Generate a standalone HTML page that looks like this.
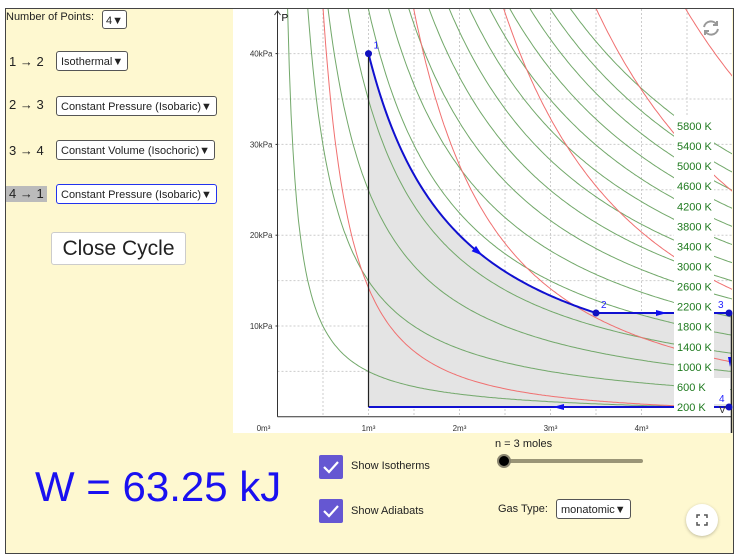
<!DOCTYPE html>
<html><head><meta charset="utf-8"><style>
body{margin:0;width:737px;height:556px;background:#fff;font-family:"Liberation Sans",sans-serif;position:relative;overflow:hidden}
#app{position:absolute;left:5px;top:8px;width:727px;height:544px;border:1px solid #444;background:#fef8d0}
.a{position:absolute;font-size:13px;color:#222}
.dd{position:absolute;height:20px;border:1px solid #555;border-radius:3px;background:#fff;font-size:11px;line-height:20px;padding:0 4px;box-sizing:border-box;color:#222;white-space:nowrap}
.cb{position:absolute;width:24px;height:24px;background:#6557d2;border-radius:2px}
.cb svg{position:absolute;left:3px;top:4px}
</style></head><body>
<div id="app"></div>
<div class="a" style="left:6px;top:11px;font-size:11px">Number of Points:</div>
<div class="dd" style="left:102px;top:10px;height:19px;padding:0 3px">4▼</div>
<div class="a" style="left:9px;top:54px">1 → 2</div>
<div class="dd" style="left:56px;top:51px">Isothermal▼</div>
<div class="a" style="left:9px;top:97px">2 → 3</div>
<div class="dd" style="left:56px;top:96px">Constant Pressure (Isobaric)▼</div>
<div class="a" style="left:9px;top:143px">3 → 4</div>
<div class="dd" style="left:56px;top:140px">Constant Volume (Isochoric)▼</div>
<div class="a" style="left:6px;top:186px;background:#bbb;padding:0 3px;height:16px;line-height:16px">4 → 1</div>
<div class="dd" style="left:56px;top:184px;border-color:#2233ee">Constant Pressure (Isobaric)▼</div>
<div style="position:absolute;left:51px;top:232px;width:133px;height:31px;border:1px solid #ccc;border-radius:3px;background:#fff;font-size:21px;line-height:31px;text-align:center;color:#222">Close Cycle</div>
<div style="position:absolute;left:35px;top:463px;font-size:42px;color:#1a10f0;line-height:48px">W = 63.25 kJ</div>
<div class="cb" style="left:319px;top:455px"><svg width="18" height="16"><path d="M2 8 L7 13 L16 3" stroke="#fff" stroke-width="2.2" fill="none"/></svg></div>
<div class="a" style="left:351px;top:460px;font-size:11px">Show Isotherms</div>
<div class="cb" style="left:319px;top:499px"><svg width="18" height="16"><path d="M2 8 L7 13 L16 3" stroke="#fff" stroke-width="2.2" fill="none"/></svg></div>
<div class="a" style="left:351px;top:505px;font-size:11px">Show Adiabats</div>
<div class="a" style="left:495px;top:438px;font-size:11px">n = 3 moles</div>
<div style="position:absolute;left:503px;top:459px;width:140px;height:4px;border-radius:2px;background:#9a9577"></div>
<div style="position:absolute;left:497px;top:454px;width:10px;height:10px;border-radius:50%;background:#000;border:2px solid #8a8570"></div>
<div class="a" style="left:498px;top:503px;font-size:11px">Gas Type:</div>
<div class="dd" style="left:556px;top:499px;width:75px">monatomic▼</div>
<div style="position:absolute;left:686px;top:504px;width:32px;height:32px;border-radius:50%;background:#fff;box-shadow:0 1px 3px rgba(0,0,0,.25)"><svg width="32" height="32"><path d="M11 14V11H14M18 11H21V14M21 18V21H18M14 21H11V18" stroke="#555" stroke-width="1.5" fill="none"/></svg></div>
<svg id="g" style="position:absolute;left:233px;top:9px" width="500" height="424"></svg>
<script>
var X=v=>277.5+91*v-233, Y=p=>416.8-9.08*p-9;
var s='<rect width="499" height="424" fill="#fff"/><defs><clipPath id="c"><rect width="499" height="424"/></clipPath></defs><g clip-path="url(#c)">';
for(var v=0.5;v<=5;v+=0.5)s+='<line x1="'+X(v)+'" y1="0" x2="'+X(v)+'" y2="'+Y(0)+'" stroke="#ccc" stroke-dasharray="2,2"/>';
for(var p=5;p<=45;p+=5)s+='<line x1="'+X(0)+'" y1="'+Y(p)+'" x2="499" y2="'+Y(p)+'" stroke="#ccc" stroke-dasharray="2,2"/>';
var f='M'+X(1)+' '+Y(40);for(var v=1;v<=3.5;v+=0.05)f+=' L'+X(v)+' '+Y(40/v);
f+=' L'+X(3.5)+' '+Y(40/3.5)+' L'+X(5)+' '+Y(40/3.5)+' L'+X(5)+' '+Y(1.08)+' L'+X(1)+' '+Y(1.08)+'Z';
s+='<path d="'+f+'" fill="#e4e4e4"/>';
function curve(fn,col){var d='';for(var v=0.05;v<=5.5;v+=0.02){var p=fn(v);if(p>60)continue;d+=(d?' L':'M')+X(v).toFixed(1)+' '+Y(p).toFixed(1);}return '<path d="'+d+'" stroke="'+col+'" fill="none" stroke-width="1"/>';}
for(var T=200;T<=5800;T+=400)(function(T){s+=curve(v=>0.02494*T/v,'#72a86a');})(T);
[14.2,88,205,363,548].forEach(K=>{s+=curve(v=>K/Math.pow(v,5/3),'#f07070');});
var d='M'+X(1)+' '+Y(40);for(var v=1;v<=3.5;v+=0.02)d+=' L'+X(v)+' '+Y(40/v);
s+='<path d="'+d+'" stroke="#1010d0" stroke-width="2" fill="none"/>';
s+='<line x1="'+X(3.5)+'" y1="'+Y(40/3.5)+'" x2="499" y2="'+Y(40/3.5)+'" stroke="#1010d0" stroke-width="2"/>';
s+='<line x1="'+X(1)+'" y1="'+Y(1.08)+'" x2="499" y2="'+Y(1.08)+'" stroke="#1010d0" stroke-width="2"/>';
s+='<line x1="'+X(1)+'" y1="'+Y(1.08)+'" x2="'+X(1)+'" y2="'+Y(40)+'" stroke="#222" stroke-width="1.2"/>';
s+='<polygon points="'+(656-233)+','+(313-9-3)+' '+(667-233)+','+(313-9)+' '+(656-233)+','+(313-9+3)+'" fill="#1010f0"/>';
s+='<polygon points="'+(553-233)+','+(407-9)+' '+(564-233)+','+(407-9-3)+' '+(564-233)+','+(407-9+3)+'" fill="#1010f0"/>';
s+='<polygon transform="translate('+X(2.2)+','+Y(40/2.2)+') rotate(39.4)" points="6,0 -5,-3.5 -5,3.5" fill="#1010f0"/>';
s+='<polygon transform="translate(497,353)" points="0,5 -2,-5 2,-5" fill="#1010f0"/>';
s+='<rect x="441" y="106" width="40" height="302" fill="#fff"/><rect x="481" y="369" width="16" height="26" fill="#fff"/>';
for(var i=0;i<15;i++){var T=5800-400*i;s+='<text x="444" y="'+(126-9+4+i*20.07)+'" fill="#1f7a1f" font-size="11">'+T+' K</text>';}
s+='<line x1="'+X(0)+'" y1="2" x2="'+X(0)+'" y2="'+Y(0)+'" stroke="#333"/><line x1="'+X(0)+'" y1="'+Y(0)+'" x2="499" y2="'+Y(0)+'" stroke="#333"/>';
s+='<path d="M'+(X(0)-3)+' 6 L'+X(0)+' 2 L'+(X(0)+3)+' 6" stroke="#333" fill="none"/><text x="'+(X(0)+4)+'" y="12" font-size="10">P</text>';
s+='<text x="486" y="404" font-size="10" fill="#333">V</text>';
[10,20,30,40].forEach(p=>{s+='<text x="'+(X(0)-5)+'" y="'+(Y(p)+3)+'" font-size="8" text-anchor="end" fill="#333">'+p+'kPa</text><line x1="'+(X(0)-2)+'" y1="'+Y(p)+'" x2="'+X(0)+'" y2="'+Y(p)+'" stroke="#333"/>';});
[0,1,2,3,4].forEach(v=>{s+='<text x="'+(X(v)-(v?0:14))+'" y="'+(Y(0)+14)+'" font-size="8" text-anchor="middle" fill="#333">'+v+'m³</text>';});
s+='</g>';
s+='<line x1="498.5" y1="'+Y(40/3.5)+'" x2="498.5" y2="424" stroke="#222" stroke-width="1.5"/>';
[[1,40],[3.5,40/3.5],[5,40/3.5],[5,1.08]].forEach(q=>{s+='<circle cx="'+Math.min(X(q[0]),496)+'" cy="'+Y(q[1])+'" r="3.5" fill="#1010c0"/>';});
s+='<text x="'+(X(1)+5)+'" y="'+(Y(40)-5)+'" fill="#22f" font-size="10">1</text><text x="'+(X(3.5)+5)+'" y="'+(Y(40/3.5)-5)+'" fill="#22f" font-size="10">2</text><text x="485" y="'+(Y(40/3.5)-5)+'" fill="#22f" font-size="10">3</text><text x="486" y="'+(Y(1.08)-5)+'" fill="#22f" font-size="10">4</text>';
s+='<g transform="translate(478,19)" stroke="#999" stroke-width="2" fill="none"><path d="M-7 -1 A7 7 0 0 1 6 -3"/><path d="M7 1 A7 7 0 0 1 -6 3"/><path d="M6 -7 V-3 H2" /><path d="M-6 7 V3 H-2"/></g>';
document.getElementById('g').innerHTML=s;
</script>
</body></html>
